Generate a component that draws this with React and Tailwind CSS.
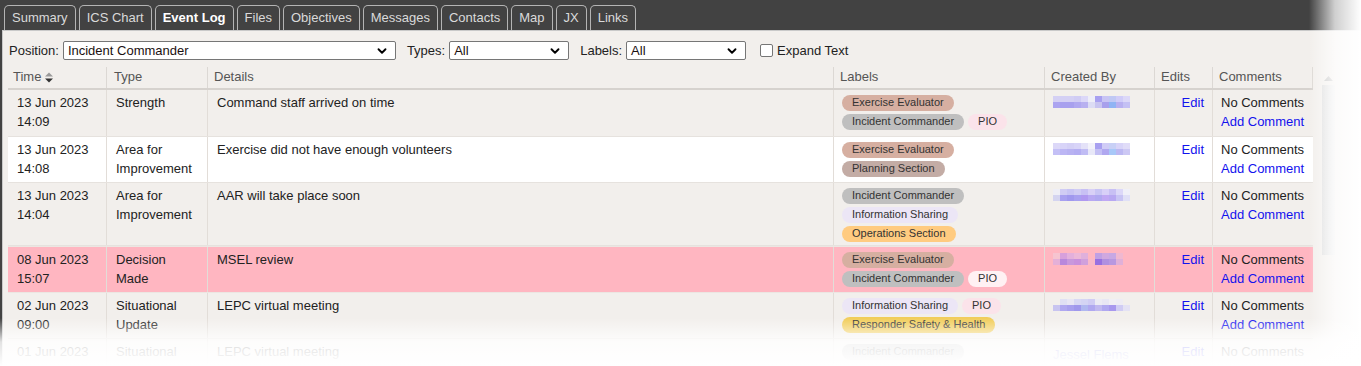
import { ChevronDown } from 'lucide-react';

const tabs = ['Summary', 'ICS Chart', 'Event Log', 'Files', 'Objectives', 'Messages', 'Contacts', 'Map', 'JX', 'Links'];

const labelStyles = {
	ee: ['Exercise Evaluator', 'bg-[#d6afa1]'],
	ic: ['Incident Commander', 'bg-[#bfbfbf]'],
	pio: ['PIO', 'bg-[#fbe3ea]'],
	pioW: ['PIO', 'bg-[#fff1f3]'],
	ps: ['Planning Section', 'bg-[#c3aca5]'],
	is: ['Information Sharing', 'bg-[#ece6f6]'],
	os: ['Operations Section', 'bg-[#ffcb80]'],
	rs: ['Responder Safety & Health', 'bg-[#f1cd5a]'],
};

const blurA = [
	['#d4d0f4', '#aca4f0'], ['#d4d0f4', '#a8a0ee'], ['#d4d0f4', '#a8a0ee'], ['#d0ccf4', '#b0a8f0'], ['#dcd8f8', '#b8b0f0'],
	['#eeeef8', '#dcdcf4'], ['#a8a0f0', '#c8c4f0'], ['#c8c4f4', '#a8a0ec'], ['#c0c8f4', '#90b4f4'], ['#d0ccf8', '#b8b0f0'], ['#dcd8f8', '#c4c0f4'],
];
const blurB = [
	['#dcd8f8', '#c4c0f6'], ['#d8d4f8', '#bcb6f4'], ['#d4d0f6', '#b8b2f2'], ['#d8d4f8', '#b4aef2'], ['#e4e2f8', '#c0bcf4'],
	['#f2f2fa', '#e8e8f8'], ['#a8a0f0', '#c4c0f4'], ['#d0ccf6', '#b0a8f0'], ['#c8d0f6', '#a8c8f8'], ['#d8d4f8', '#bcb8f2'], ['#e0dcf8', '#ccc8f4'],
];
const blurC = [
	['#eeeef6', '#d4d4f0'], ['#d0ccf4', '#a8a0f0'], ['#c8c4f4', '#a098ee'], ['#d0ccf4', '#a8a0f0'], ['#c8c0f4', '#b098f0'], ['#d8d0f6', '#b8a8f2'],
	['#c8c4f4', '#b0a8f0'], ['#d8d0f8', '#c0a8f4'], ['#c8c0f4', '#b8a8f2'], ['#dcd8f8', '#c8c4f4'], ['#f0f0f8', '#e0e0f6'],
];
const blurD = [
	['#f6c4d0', '#e4b0d8'], ['#d8a0dc', '#b888dc'], ['#e4b0dc', '#c898dc'], ['#ecb8d8', '#c890dc'], ['#e0b0dc', '#d0a0dc'], ['#ffb6c1', '#f8b8c8'],
	['#c0a0e4', '#9870e0'], ['#d0a8e0', '#b090e0'], ['#c8a8e4', '#b898e0'], ['#f0b8d0', '#e0b0d8'], ['#ffb6c1', '#ffb6c1'],
];
const blurE = [
	['#f2efec', '#c8c4f0'], ['#e0e0f4', '#b0a8f0'], ['#e8e6f4', '#a8a0ee'], ['#d8d8f4', '#a098ec'], ['#d4d4f4', '#b0b8f0'], ['#d0ccf4', '#b0a8f0'],
	['#ecebf4', '#c0b8f0'], ['#e8e6f4', '#b0a8f0'], ['#f0eef4', '#a898ee'], ['#eeecf4', '#d0ccf4'], ['#f2efec', '#e4e2f4'],
];

const rows = [
	{ date: '13 Jun 2023', time: '14:09', type: ['Strength'], details: 'Command staff arrived on time', labels: [['ee'], ['ic', 'pio']], bg: 'bg-[#f2efec]', h: 'h-[47px]', blur: blurA, comment: true },
	{ date: '13 Jun 2023', time: '14:08', type: ['Area for', 'Improvement'], details: 'Exercise did not have enough volunteers', labels: [['ee'], ['ps']], bg: 'bg-white', h: 'h-[46px]', blur: blurB, comment: true },
	{ date: '13 Jun 2023', time: '14:04', type: ['Area for', 'Improvement'], details: 'AAR will take place soon', labels: [['ic'], ['is'], ['os']], bg: 'bg-[#f2efec]', h: 'h-[63px]', blur: blurC, comment: true },
	{ date: '08 Jun 2023', time: '15:07', type: ['Decision', 'Made'], details: 'MSEL review', labels: [['ee'], ['ic', 'pioW']], bg: 'bg-[#ffb6c1]', h: 'h-[47px]', blur: blurD, pink: true, comment: true },
	{ date: '02 Jun 2023', time: '09:00', type: ['Situational', 'Update'], details: 'LEPC virtual meeting', labels: [['is', 'pio'], ['rs']], bg: 'bg-[#f2efec]', h: 'h-[46px]', blur: blurE, comment: true },
	{ date: '01 Jun 2023', time: null, type: ['Situational'], details: 'LEPC virtual meeting', labels: [['ic']], bg: 'bg-[#f2efec]', h: 'h-[28px]', name: 'Jessel Flems' },
];

const cols = 'grid grid-cols-[99px_101px_626px_211px_110px_58px_100px]';

function Select({ value, width }) {
	return (
		<div className={`flex h-[19px] items-center justify-between rounded-[2px] border border-[#767676] bg-white pr-[6px] pl-[4px] text-[13px] text-[#1a1010] ${width}`}>
			<span>{value}</span>
			<ChevronDown size={14} strokeWidth={3.2} className="text-black" />
		</div>
	);
}

function Blur({ blocks }) {
	return (
		<div className="flex">
			{blocks.map((b, i) => (
				<div key={i} className="flex flex-col">
					<div className="h-[6px] w-[7px]" style={{ background: b[0] }} />
					<div className="h-[6px] w-[7px]" style={{ background: b[1] }} />
				</div>
			))}
		</div>
	);
}

function Label({ id }) {
	const [text, bg] = labelStyles[id];
	return <span className={`inline-flex h-[16px] items-center rounded-full px-[10px] text-[11px] text-[#333] ${bg}`}>{text}</span>;
}

export default function App() {
	return (
		<div className="relative h-[366px] w-[1361px] overflow-hidden bg-white font-['Liberation_Sans',Arial,sans-serif]">
			<div className="bg-[#424242] pl-[2px]">
				<div className="flex h-[30px] items-end gap-[3px] pl-[2px]">
					{tabs.map((t) => (
						<div
							key={t}
							className={`flex h-[25px] items-center rounded-t-[5px] border border-b-0 border-[#b4b4b4] px-[7px] text-[13px] ${t === 'Event Log' ? 'font-bold text-white' : 'text-[#dadada]'}`}
						>
							{t}
						</div>
					))}
				</div>
				<div className="h-[336px] border-t border-l border-[#c9c9c9] bg-[#f2efec]">
					<div className="flex items-center pt-[10px] pl-[6px] text-[13px] text-[#222]">
						<span className="mr-[4px]">Position:</span>
						<Select value="Incident Commander" width="w-[333px]" />
						<span className="mr-[4px] ml-[11px]">Types:</span>
						<Select value="All" width="w-[120px]" />
						<span className="mr-[4px] ml-[11px]">Labels:</span>
						<Select value="All" width="w-[120px]" />
						<span className="mr-[4px] ml-[14px] h-[13px] w-[13px] rounded-[2px] border border-[#767676] bg-white" />
						<span>Expand Text</span>
					</div>

					<div className="mt-[6px] flex">
						<div className="ml-[5px] w-[1305px]">
							<div className={`${cols} h-[23px] border-b-2 border-[#d6d2ce] text-[13px] text-[#555]`}>
								<div className="flex items-center gap-[4px] border-r border-[#dcd8d4] pl-[5px]">
									Time
									<svg width="8" height="11" viewBox="0 0 8 11" className="mt-[1px]">
										<path d="M0 4.5 L4 0.5 L8 4.5 Z" fill="#9a9a9a" />
										<path d="M0 6.5 L4 10.5 L8 6.5 Z" fill="#333" />
									</svg>
								</div>
								<div className="flex items-center border-r border-[#dcd8d4] pl-[7px]">Type</div>
								<div className="flex items-center border-r border-[#dcd8d4] pl-[6px]">Details</div>
								<div className="flex items-center border-r border-[#dcd8d4] pl-[6px]">Labels</div>
								<div className="flex items-center border-r border-[#dcd8d4] pl-[6px]">Created By</div>
								<div className="flex items-center border-r border-[#dcd8d4] pl-[6px]">Edits</div>
								<div className="flex items-center border-r border-[#dcd8d4] pl-[6px]">Comments</div>
							</div>
							{rows.map((r, i) => (
								<div key={i} className={`${cols} ${r.h} ${r.bg} border-b border-[#e6e2de] text-[13px] leading-[19px] text-[#222] ${r.pink ? 'border-t border-[#ece6e2]' : ''}`}>
									<div className="border-r border-[#e2ddd8] pt-[3px] pl-[9px]">
										<div>{r.date}</div>
										{r.time && <div>{r.time}</div>}
									</div>
									<div className="border-r border-[#e2ddd8] pt-[3px] pl-[9px]">
										{r.type.map((t) => (
											<div key={t}>{t}</div>
										))}
									</div>
									<div className="border-r border-[#e2ddd8] pt-[3px] pl-[9px]">{r.details}</div>
									<div className="flex flex-col gap-[3px] border-r border-[#e2ddd8] pt-[5px] pl-[8px]">
										{r.labels.map((line, j) => (
											<div key={j} className="flex gap-[4px]">
												{line.map((l) => (
													<Label key={l} id={l} />
												))}
											</div>
										))}
									</div>
									<div className="border-r border-[#e2ddd8] pt-[6px] pl-[8px]">
										{r.name ? <span className="text-[#6b6bd8]">{r.name}</span> : <Blur blocks={r.blur} />}
									</div>
									<div className="border-r border-[#e2ddd8] pt-[3px] pr-[8px] text-right text-[#1212ee]">Edit</div>
									<div className="pt-[3px] pl-[8px]">
										<div>No Comments</div>
										{r.comment && <div className="text-[#1212ee]">Add Comment</div>}
									</div>
								</div>
							))}
						</div>
						<div className="ml-[9px] flex w-[13px] flex-col items-center pt-[9px]">
							<svg width="9" height="5" viewBox="0 0 9 5">
								<path d="M0 5 L4.5 0 L9 5 Z" fill="#c4c4c4" />
							</svg>
							<div className="mt-[4px] h-[170px] w-[13px] bg-linear-to-r from-[#dedede] to-[#ececec]" />
						</div>
					</div>
				</div>
			</div>

			<div className="pointer-events-none absolute top-0 right-0 h-full w-[52px] bg-linear-to-r from-white/0 via-white/75 to-white" />
			<div className="pointer-events-none absolute bottom-0 left-0 h-[48px] w-full bg-linear-to-b from-white/0 via-white/85 to-white" />
		</div>
	);
}
